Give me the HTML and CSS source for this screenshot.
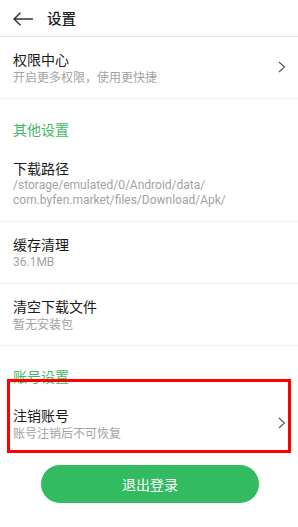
FILE: index.html
```html
<!DOCTYPE html>
<html lang="zh">
<head>
<meta charset="utf-8">
<link rel="stylesheet" href="styles.css">
</head>
<body>
<div class="page">
  <header class="topbar">
    <svg class="back" width="20" height="14" viewBox="0 0 20 14"><path d="M1 7H20M7.5 0.8L1 7L7.5 13.2" fill="none" stroke="#333" stroke-width="1.5"/></svg>
    <span class="topbar-title">设置</span>
  </header>

  <div class="item">
    <div class="item-text">
      <div class="item-title">权限中心</div>
      <div class="item-sub">开启更多权限，使用更快捷</div>
    </div>
    <svg class="chev" width="8" height="12" viewBox="0 0 8 12"><path d="M1 1L6.5 6L1 11" fill="none" stroke="#555" stroke-width="1.1"/></svg>
  </div>

  <div class="group">其他设置</div>

  <div class="item">
    <div class="item-text">
      <div class="item-title">下载路径</div>
      <div class="item-sub path">/storage/emulated/0/Android/data/<br>com.byfen.market/files/Download/Apk/</div>
    </div>
  </div>

  <div class="item">
    <div class="item-text">
      <div class="item-title">缓存清理</div>
      <div class="item-sub num">36.1MB</div>
    </div>
  </div>

  <div class="item">
    <div class="item-text">
      <div class="item-title">清空下载文件</div>
      <div class="item-sub">暂无安装包</div>
    </div>
  </div>

  <div class="group">账号设置</div>

  <div class="item last">
    <div class="item-text">
      <div class="item-title">注销账号</div>
      <div class="item-sub">账号注销后不可恢复</div>
    </div>
    <svg class="chev" width="8" height="12" viewBox="0 0 8 12"><path d="M1 1L6.5 6L1 11" fill="none" stroke="#555" stroke-width="1.1"/></svg>
  </div>

  <div class="btn-wrap">
    <button class="logout">退出登录</button>
  </div>

  <div class="highlight"></div>
</div>
</body>
</html>
```

FILE: styles.css
```css
* { box-sizing: border-box; }
html, body { margin: 0; padding: 0; background: #fff; }
body {
  font-family: "Noto Sans CJK SC", Roboto, "Noto Sans", sans-serif;
  width: 298px;
  height: 527px;
  overflow: hidden;
}
.page { position: relative; width: 298px; height: 527px; background: #fff; }

.topbar {
  height: 37px;
  display: flex;
  align-items: center;
  padding-left: 13px;
  border-bottom: 1px solid #e6e6e6;
}
.back { display: block; margin-top: 1px; }
.topbar-title {
  margin-left: 14px;
  font-size: 14.5px;
  font-weight: 500;
  color: #1e1e1e;
  line-height: 20px;
}

.item {
  display: flex;
  align-items: center;
  padding: 12px 12px 13px 13px;
  border-bottom: 1px solid #f0f0f0;
}
.item.last { border-bottom: none; }
.item-text { flex: 1; min-width: 0; }
.item-title {
  font-size: 14px;
  line-height: 20px;
  color: #1a1a1a;
}
.item-sub {
  font-size: 12px;
  line-height: 16px;
  color: #a3a3a3;
}
.item-sub.path, .item-sub.num {
  font-family: Roboto, "Noto Sans CJK SC", sans-serif;
}
.item-sub.path { line-height: 15px; }
.chev { display: block; flex: none; }

.group {
  height: 47px;
  padding: 20px 13px 0;
  font-size: 14px;
  line-height: 20px;
  color: #3dba62;
}

.btn-wrap {
  display: flex;
  justify-content: center;
  padding-top: 11px;
  padding-left: 2px;
}
.logout {
  width: 218px;
  height: 38px;
  border: none;
  border-radius: 19px;
  background: #33bb62;
  color: #fff;
  font-family: "Noto Sans CJK SC", sans-serif;
  font-size: 14px;
  padding: 0;
}

.highlight {
  position: absolute;
  left: 7px;
  top: 379px;
  width: 284px;
  height: 74px;
  border: 3px solid #ff0000;
  pointer-events: none;
}
```
